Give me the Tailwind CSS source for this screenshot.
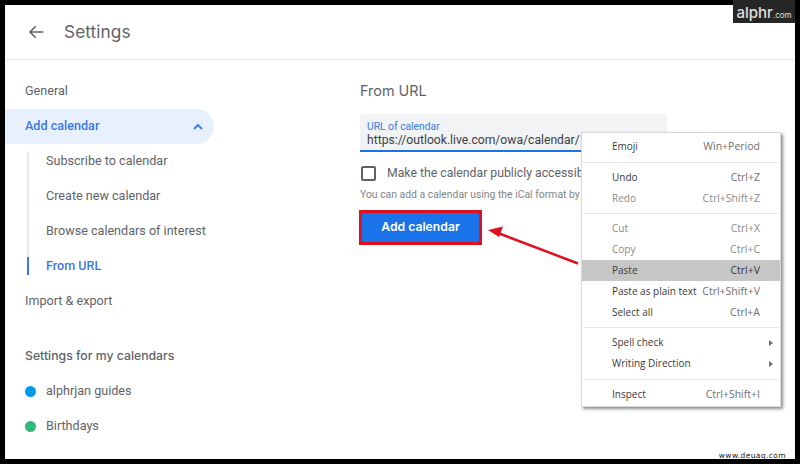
<!DOCTYPE html>
<html><head><meta charset="utf-8">
<script src="https://cdn.jsdelivr.net/npm/@tailwindcss/browser@4"></script>
</head>
<body class="m-0">
<div class="relative w-[800px] h-[464px] overflow-hidden bg-black p-[5px] font-['Roboto',sans-serif] text-[#5f6368]">
  <div class="w-[790px] h-[454px] bg-white flex flex-col overflow-hidden">
    <header class="h-[55px] shrink-0 flex items-center border-b border-[#e4e5e7] pl-[21px] pb-[1px]">
      <svg class="w-[20px] h-[20px] text-[#5f6368]" viewBox="0 0 20 20" fill="none" stroke="currentColor" stroke-width="1.6"><path d="M17.3 10H4.2M9.7 4.3 4 10l5.7 5.7"/></svg>
      <h1 class="ml-[18px] text-[17.2px] font-['Inter',sans-serif] text-[#5f6368] tracking-[0.1px]">Settings</h1>
    </header>
    <div class="flex flex-1 min-h-0">
      <nav class="w-[355px] shrink-0 pt-[12px] text-[12.6px]">
        <div class="h-[37px] pt-[2px] flex items-center pl-[20px]">General</div>
        <div class="h-[35px] w-[209px] flex items-center justify-between pl-[20px] pr-[10px] rounded-r-full bg-[#e8f0fe] text-[#3b78e7] font-medium">
          <span>Add calendar</span>
          <svg class="w-[12px] h-[12px]" viewBox="0 0 12 12" fill="none" stroke="currentColor" stroke-width="1.8"><path d="M2 8l4-4 4 4"/></svg>
        </div>
        <div class="ml-[22px] mt-[8px] border-l-2 border-[#e8eaed] flex flex-col">
          <div class="h-[18px] mb-[8px] flex items-center pl-[17px]">Subscribe to calendar</div>
          <div class="h-[35px] pt-[2px] flex items-center pl-[17px]">Create new calendar</div>
          <div class="h-[35px] pt-[2px] flex items-center pl-[17px]">Browse calendars of interest</div>
          <div class="h-[18px] mt-[9px] flex items-center pl-[17px] -ml-[2px] border-l-2 border-[#3b78e7] text-[#3b78e7] font-medium">From URL</div>
        </div>
        <div class="h-[35px] mt-[9px] flex items-center pl-[20px]">Import &amp; export</div>
        <div class="h-[35px] mt-[20px] flex items-center pl-[20px] font-medium font-['Inter',sans-serif] text-[12.25px]">Settings for my calendars</div>
        <div class="h-[35px] flex items-center pl-[20px] gap-[10px]"><span class="w-[11px] h-[11px] rounded-full bg-[#039be5]"></span>alphrjan guides</div>
        <div class="h-[35px] flex items-center pl-[20px] gap-[10px]"><span class="w-[11px] h-[11px] rounded-full bg-[#33b679]"></span>Birthdays</div>
      </nav>
      <main class="flex-1 pt-[20px] min-w-0">
        <h2 class="text-[14.4px] leading-[22px] text-[#5f6368] font-['Inter',sans-serif]">From URL</h2>
        <div class="mt-[12px] w-[307px] h-[38px] bg-[#f1f3f4] rounded-t-[4px] border-b-2 border-[#1a73e8] pl-[7px] pt-[6px] overflow-hidden">
          <div class="text-[10.3px] leading-[13px] text-[#3b78e7]">URL of calendar</div>
          <div class="text-[12.15px] leading-[15px] text-[#3c4043] whitespace-nowrap">https://outlook.live.com/owa/calendar/</div>
        </div>
        <div class="mt-[12px] flex items-center h-[18px] text-[12.25px] whitespace-nowrap">
          <span class="ml-[1px] w-[15px] h-[15px] rounded-[2px] border-2 border-[#5f6368]"></span>
          <span class="ml-[11px]">Make the calendar publicly accessible</span>
        </div>
        <p class="mt-[5px] text-[10.4px] leading-[16px] text-[#80868b] whitespace-nowrap">You can add a calendar using the iCal format by</p>
        <button class="mt-[7px] -ml-[1px] block w-[123px] h-[35px] bg-[#1a73e8] border-[3px] border-[#e0101e] text-white text-[12.2px] font-semibold font-['Inter',sans-serif]">Add calendar</button>
      </main>
    </div>
  </div>

  <!-- alphr logo -->
  <div class="absolute left-[733px] top-0 w-[62px] h-[23px] pt-[4px] bg-[#262626] flex items-baseline justify-center text-[#e0e0e0] font-['Inter',sans-serif] leading-[18px]">
    <span class="text-[15px] font-medium">alphr</span><span class="text-[8px]">.com</span>
  </div>

  <!-- arrow -->
  <svg class="absolute left-0 top-0 w-[800px] h-[464px] pointer-events-none" viewBox="0 0 800 464">
    <path d="M578 263.5 498 233" stroke="#e0101e" stroke-width="2.5" fill="none"/>
    <path d="M488 230 503 226.5 499 237Z" fill="#e0101e"/>
  </svg>

  <!-- context menu -->
  <div class="absolute left-[581px] top-[132px] w-[200px] h-[275px] bg-white border border-[#d9d9d9] shadow-[2px_2px_3px_rgba(0,0,0,0.45)] pt-[3px] text-[10px] font-['Open_Sans',sans-serif] text-[#3a3a3a]">
    <div class="h-[21px] flex items-center justify-between pl-[30px] pr-[20px]"><span>Emoji</span><span class="text-[10.5px] text-[#6e6e6e]">Win+Period</span></div>
    <div class="h-px bg-[#e6e6e6] mx-[1px] my-[4.5px]"></div>
    <div class="h-[21px] flex items-center justify-between pl-[30px] pr-[20px]"><span>Undo</span><span class="text-[10.5px] text-[#6e6e6e]">Ctrl+Z</span></div>
    <div class="h-[21px] flex items-center justify-between pl-[30px] pr-[20px] text-[#8a8a8a]"><span>Redo</span><span class="text-[10.5px]">Ctrl+Shift+Z</span></div>
    <div class="h-px bg-[#e6e6e6] mx-[1px] my-[4px]"></div>
    <div class="h-[21px] flex items-center justify-between pl-[30px] pr-[20px] text-[#8a8a8a]"><span>Cut</span><span class="text-[10.5px]">Ctrl+X</span></div>
    <div class="h-[21px] flex items-center justify-between pl-[30px] pr-[20px] text-[#8a8a8a]"><span>Copy</span><span class="text-[10.5px]">Ctrl+C</span></div>
    <div class="h-[21px] flex items-center justify-between pl-[30px] pr-[20px] bg-[#c6c6c6]"><span>Paste</span><span class="text-[10.5px]">Ctrl+V</span></div>
    <div class="h-[21px] flex items-center justify-between pl-[30px] pr-[20px]"><span>Paste as plain text</span><span class="text-[10.5px] text-[#6e6e6e]">Ctrl+Shift+V</span></div>
    <div class="h-[21px] flex items-center justify-between pl-[30px] pr-[20px]"><span>Select all</span><span class="text-[10.5px] text-[#6e6e6e]">Ctrl+A</span></div>
    <div class="h-px bg-[#e6e6e6] mx-[1px] my-[4px]"></div>
    <div class="h-[21px] flex items-center justify-between pl-[30px] pr-[7px]"><span>Spell check</span><span class="w-0 h-0 border-y-[3.5px] border-y-transparent border-l-[4px] border-l-[#6e6e6e]"></span></div>
    <div class="h-[21px] flex items-center justify-between pl-[30px] pr-[7px]"><span>Writing Direction</span><span class="w-0 h-0 border-y-[3.5px] border-y-transparent border-l-[4px] border-l-[#6e6e6e]"></span></div>
    <div class="h-px bg-[#e6e6e6] mx-[1px] my-[4.5px]"></div>
    <div class="h-[21px] flex items-center justify-between pl-[30px] pr-[20px]"><span>Inspect</span><span class="text-[10.5px] text-[#6e6e6e]">Ctrl+Shift+I</span></div>
  </div>

  <div class="absolute right-[14px] bottom-[4px] text-[7.5px] leading-[9px] text-[#222] font-['DejaVu_Sans',sans-serif] tracking-[0.4px]">www.deuaq.com</div>
</div>
</body></html>
